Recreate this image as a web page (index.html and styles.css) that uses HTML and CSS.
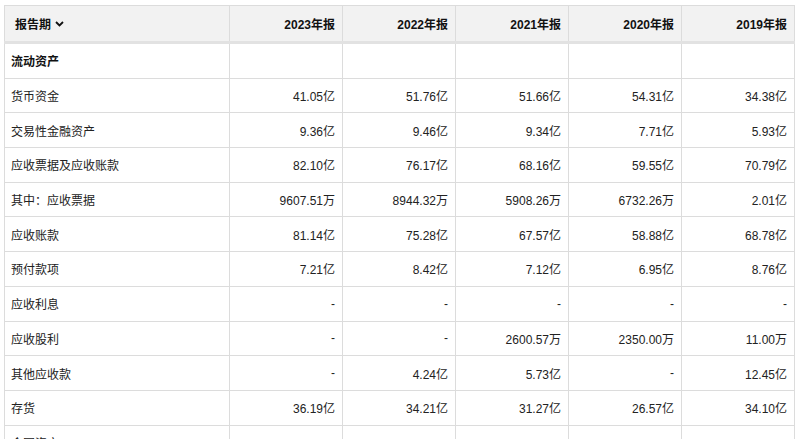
FILE: index.html
```html
<!DOCTYPE html>
<html lang="zh">
<head>
<meta charset="utf-8">
<link rel="stylesheet" href="styles.css">
</head>
<body>
<div class="wrap">
<table class="fin">
  <colgroup>
    <col class="c-name"><col class="c-val"><col class="c-val"><col class="c-val"><col class="c-val"><col class="c-val">
  </colgroup>
  <thead>
    <tr>
      <th class="period"><span>报告期</span><svg class="chev" width="9" height="6" viewBox="0 0 9 6"><path d="M1 1 L4.5 4.5 L8 1" fill="none" stroke="#111" stroke-width="1.8"/></svg></th>
      <th>2023年报</th><th>2022年报</th><th>2021年报</th><th>2020年报</th><th>2019年报</th>
    </tr>
  </thead>
  <tbody>
    <tr class="section"><td>流动资产</td><td></td><td></td><td></td><td></td><td></td></tr>
    <tr><td>货币资金</td><td>41.05亿</td><td>51.76亿</td><td>51.66亿</td><td>54.31亿</td><td>34.38亿</td></tr>
    <tr><td>交易性金融资产</td><td>9.36亿</td><td>9.46亿</td><td>9.34亿</td><td>7.71亿</td><td>5.93亿</td></tr>
    <tr><td>应收票据及应收账款</td><td>82.10亿</td><td>76.17亿</td><td>68.16亿</td><td>59.55亿</td><td>70.79亿</td></tr>
    <tr><td>其中：应收票据</td><td>9607.51万</td><td>8944.32万</td><td>5908.26万</td><td>6732.26万</td><td>2.01亿</td></tr>
    <tr><td>应收账款</td><td>81.14亿</td><td>75.28亿</td><td>67.57亿</td><td>58.88亿</td><td>68.78亿</td></tr>
    <tr><td>预付款项</td><td>7.21亿</td><td>8.42亿</td><td>7.12亿</td><td>6.95亿</td><td>8.76亿</td></tr>
    <tr><td>应收利息</td><td>-</td><td>-</td><td>-</td><td>-</td><td>-</td></tr>
    <tr><td>应收股利</td><td>-</td><td>-</td><td>2600.57万</td><td>2350.00万</td><td>11.00万</td></tr>
    <tr><td>其他应收款</td><td>-</td><td>4.24亿</td><td>5.73亿</td><td>-</td><td>12.45亿</td></tr>
    <tr><td>存货</td><td>36.19亿</td><td>34.21亿</td><td>31.27亿</td><td>26.57亿</td><td>34.10亿</td></tr>
    <tr><td>合同资产</td><td></td><td></td><td></td><td></td><td></td></tr>
  </tbody>
</table>
</div>
</body>
</html>
```

FILE: styles.css
```css
html, body {
  margin: 0;
  padding: 0;
  background: #fff;
}
body {
  font-family: "Liberation Sans", Arial, "Noto Sans CJK SC", sans-serif;
  font-size: 12px;
  color: #222;
  overflow: hidden;
}
.wrap {
  padding: 5px 0 0 4px;
}
.fin {
  border-collapse: collapse;
  table-layout: fixed;
  width: 791px;
}
.c-name { width: 225px; }
.c-val { width: 113px; }
.fin th, .fin td {
  border: 1px solid #dcdcdc;
  padding: 0 7px 0 7px;
  text-align: right;
  white-space: nowrap;
  overflow: hidden;
}
.fin th {
  background: #f2f2f2;
  height: 35px;
  font-weight: bold;
  color: #111;
  border-bottom: 3px solid #e2e2e2;
}
.fin th.period {
  text-align: left;
  padding-left: 10px;
}
.period span {
  vertical-align: middle;
}
.chev {
  margin-left: 4px;
  vertical-align: middle;
}
.fin td {
  height: 33.7px;
}
.fin td:first-child {
  text-align: left;
  padding-left: 6px;
}
.section td:first-child {
  font-weight: bold;
  color: #111;
}
```
